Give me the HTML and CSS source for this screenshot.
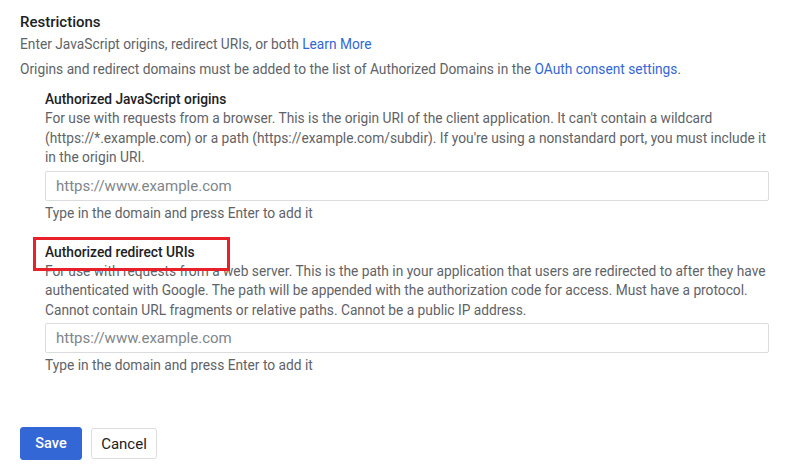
FILE: index.html
```html
<!DOCTYPE html>
<html>
<head>
<meta charset="utf-8">
<link rel="stylesheet" href="styles.css">
</head>
<body>
<div class="page">
  <h2 class="title">Restrictions</h2>
  <p class="intro">Enter JavaScript origins, redirect URIs, or both <a class="link">Learn More</a></p>
  <p class="intro second">Origins and redirect domains must be added to the list of Authorized Domains in the <a class="link">OAuth consent settings</a>.</p>

  <section class="field first">
    <h3 class="field-title">Authorized JavaScript origins</h3>
    <p class="desc">For use with requests from a browser. This is the origin URI of the client application. It can't contain a wildcard (https://*.example.com) or a path (https://example.com/subdir). If you're using a nonstandard port, you must include it in the origin URI.</p>
    <input class="text-input" type="text" placeholder="https://www.example.com">
    <div class="hint">Type in the domain and press Enter to add it</div>
  </section>

  <section class="field second-field">
    <h3 class="field-title"><span class="highlight">Authorized redirect URIs</span></h3>
    <p class="desc">For use with requests from a web server. This is the path in your application that users are redirected to after they have authenticated with Google. The path will be appended with the authorization code for access. Must have a protocol. Cannot contain URL fragments or relative paths. Cannot be a public IP address.</p>
    <input class="text-input" type="text" placeholder="https://www.example.com">
    <div class="hint">Type in the domain and press Enter to add it</div>
  </section>

  <div class="actions">
    <button class="btn primary">Save</button>
    <button class="btn secondary">Cancel</button>
  </div>
</div>
</body>
</html>
```

FILE: styles.css
```css
* { box-sizing: border-box; }
html, body { margin: 0; padding: 0; background: #fff; }
body {
  font-family: Roboto, "Liberation Sans", Arial, sans-serif;
  color: #5f6368;
  font-size: 13.75px;
}
.page {
  padding: 12px 0 0 20px;
  width: 802px;
}
.title {
  margin: 0;
  font-size: 15px;
  font-weight: 500;
  color: #202124;
  line-height: 20px;
}
.intro {
  margin: 2px 0 0;
  line-height: 20px;
}
.intro.second { margin-top: 5px; }
.link { color: #3367d6; text-decoration: none; }
.field {
  margin-left: 25px;
  width: 745px;
}
.field.first { margin-top: 11px; }
.field.second-field { margin-top: 21px; }
.field-title {
  margin: 0;
  font-size: 13.75px;
  font-weight: 500;
  color: #202124;
  line-height: 19px;
}
.highlight {
  position: relative;
}
.highlight::after {
  content: "";
  position: absolute;
  left: -12px;
  top: -7px;
  width: 191px;
  height: 28px;
  border: 3px solid #e8202a;
}
.desc {
  margin: 0;
  max-width: 726px;
  line-height: 19.5px;
}
.text-input {
  display: block;
  margin-top: 3px;
  width: 724px;
  height: 30px;
  border: 1px solid #dadce0;
  border-radius: 2px;
  padding: 0 10px;
  font-family: Roboto, "Liberation Sans", Arial, sans-serif;
  font-size: 15px;
  outline: none;
}
.text-input::placeholder { color: #80868b; }
.hint {
  margin-top: 3px;
  line-height: 18px;
}
.actions {
  margin-top: 53px;
  display: flex;
  align-items: center;
  gap: 9px;
}
.btn {
  font-family: Roboto, "Liberation Sans", Arial, sans-serif;
  font-size: 14.5px;
  font-weight: 500;
  border-radius: 3px;
  cursor: pointer;
}
.btn.primary {
  background: #3367d6;
  color: #fff;
  border: 1px solid #3367d6;
  width: 62px;
  height: 33px;
}
.btn.secondary {
  background: #fff;
  color: #202124;
  font-size: 15px;
  font-weight: 400;
  border: 1px solid #dadce0;
  width: 66px;
  height: 31px;
}
```
